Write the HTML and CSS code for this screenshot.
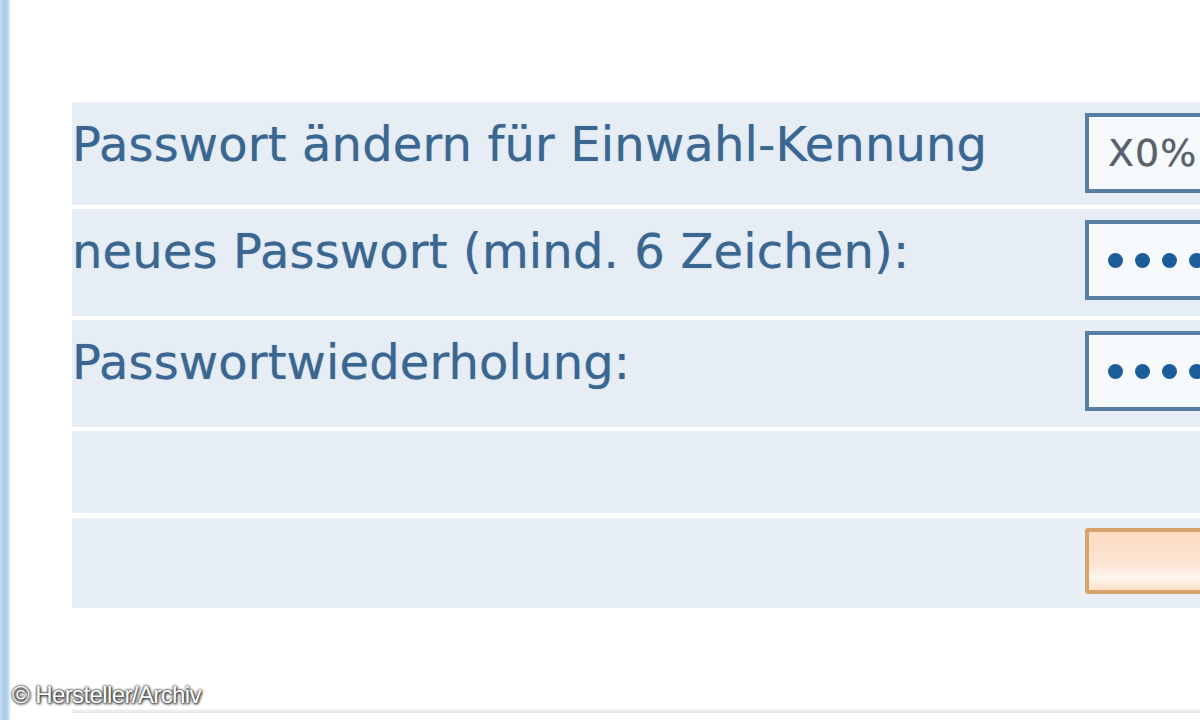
FILE: index.html
```html
<!DOCTYPE html>
<html lang="de">
<head>
<meta charset="utf-8">
<title>Passwort ändern</title>
<link rel="stylesheet" href="styles.css">
</head>
<body>
<div class="page">
  <div class="edge"></div>
  <main class="main">
    <div class="form">
      <div class="row row-a">
        <div class="label">Passwort ändern für Einwahl-Kennung</div>
        <div class="field"><span class="value">X0%</span></div>
      </div>
      <div class="row row-b">
        <div class="label">neues Passwort (mind. 6 Zeichen):</div>
        <div class="field"><span class="dots"><i></i><i></i><i></i><i></i></span></div>
      </div>
      <div class="row row-b">
        <div class="label">Passwortwiederholung:</div>
        <div class="field"><span class="dots"><i></i><i></i><i></i><i></i></span></div>
      </div>
      <div class="row row-c"></div>
      <div class="row row-d">
        <div class="label"></div>
        <div class="button"></div>
      </div>
    </div>
    <div class="bottom-line"></div>
  </main>
</div>
<div class="credit">© Hersteller/Archiv</div>
</body>
</html>
```
FILE: styles.css
```css
html, body {
  margin: 0;
  padding: 0;
  background: #ffffff;
  overflow: hidden;
}
body {
  width: 1200px;
  height: 720px;
  position: relative;
  font-family: "DejaVu Sans", Verdana, sans-serif;
}
.page {
  display: flex;
  height: 720px;
}
.edge {
  flex: 0 0 11px;
  background: linear-gradient(to right, #c6dcef 0px, #b4d0ea 3px, #a9c9e6 5px, #bcd6ec 8px, #eef5fb 10px, #ffffff 11px);
}
.main {
  flex: 1;
  padding-top: 102px;
  padding-left: 61px;
  overflow: hidden;
}
.form {
  display: flex;
  flex-direction: column;
  gap: 4px;
}
.row {
  display: flex;
  align-items: flex-start;
  background: #e6edf5;
}
.row-a { height: 103px; }
.row-b { height: 107px; }
.row-c { height: 82px; background: #e9eff7; }
.row-d { height: 90px; margin-top: 1px; background: #e9eff7; }
.label {
  flex: 0 0 1013px;
  padding-top: 14px;
  font-size: 48px;
  color: #3a6792;
  letter-spacing: 0.15px;
  white-space: nowrap;
  line-height: 56px;
  text-shadow: 0 0 1px rgba(40, 80, 120, 0.5);
}
.field {
  flex: 0 0 220px;
  box-sizing: border-box;
  height: 80px;
  margin-top: 11px;
  border: 4px solid #5a7da3;
  background: #f7fafd;
  display: flex;
  align-items: center;
  padding-left: 19px;
  overflow: hidden;
}
.value {
  font-size: 38px;
  color: #58616e;
  letter-spacing: 1px;
  text-shadow: 0 0 1px rgba(60, 70, 80, 0.5);
}
.dots {
  display: flex;
  gap: 12px;
}
.dots i {
  display: block;
  width: 15px;
  height: 15px;
  border-radius: 50%;
  background: #1d5c9a;
}
.button {
  flex: 0 0 220px;
  box-sizing: border-box;
  height: 66px;
  margin-top: 10px;
  border: 4px solid #d9a26c;
  border-radius: 3px;
  background: linear-gradient(to bottom, #fcdcc4 0%, #fde4d2 55%, #fff6ef 80%, #fcdfc8 100%);
}
.bottom-line {
  margin-top: 101px;
  height: 4px;
  background: linear-gradient(to bottom, #f4f6f8, #e2e6ea);
}
.credit {
  position: absolute;
  left: 12px;
  top: 681px;
  font-family: "Liberation Sans", Arial, sans-serif;
  font-size: 24px;
  color: #ffffff;
  letter-spacing: -0.6px;
  text-shadow: 0 0 2px #333, 0 0 3px #444, 1px 1px 3px #111;
}
```
